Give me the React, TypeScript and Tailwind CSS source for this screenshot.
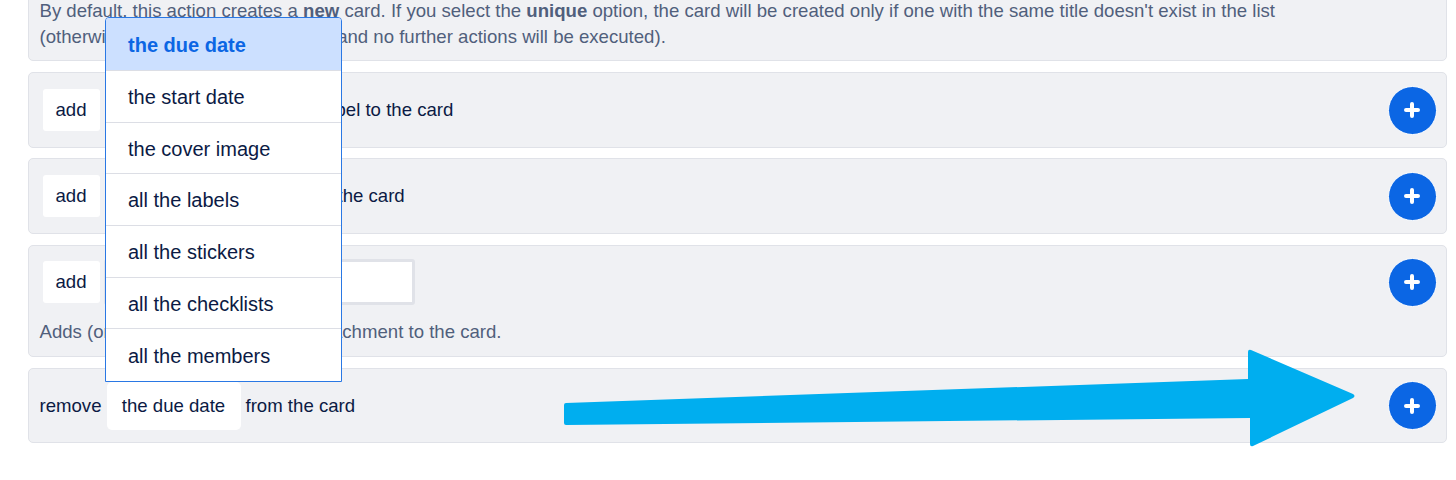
import React from 'react';

const options = ['the due date', 'the start date', 'the cover image', 'all the labels', 'all the stickers', 'all the checklists', 'all the members'];

const AddButton = () => (
  <button className="flex h-[49px] w-[49px] shrink-0 items-center justify-center rounded-full border border-white bg-[#0b66e4]">
    <svg width="18" height="18" viewBox="0 0 18 18" className="ml-[-1px]">
      <path d="M9 3v12M3 9h12" stroke="#fff" strokeWidth="4" strokeLinecap="round" />
    </svg>
  </button>
);

const Pill = ({ children }: { children: React.ReactNode }) => (
  <span className="flex h-[42px] w-[57px] items-center justify-center rounded-[3px] bg-white">{children}</span>
);

const App: React.FC = () => {
  return (
    <div className="relative h-[480px] w-[1456px] overflow-hidden bg-white font-['Liberation_Sans',Arial,sans-serif] text-[18.6px] text-[#0b1a44]">
      <div className="ml-[28px] mt-[-20px] flex w-[1419px] flex-col">
        {/* Description card */}
        <div className="h-[81px] rounded-[5px] border-[1.5px] border-[#e0e2e8] bg-[#f0f1f4] px-[10.5px] pt-[16.5px] leading-[26px] text-[#505f7c]">
          <p>
            By default, this action creates a <strong>new</strong> card. If you select the <strong>unique</strong> option, the card will be created only if one with the same title doesn't exist in the list
          </p>
          <p>(otherwise an error will be reported, and no further actions will be executed).</p>
        </div>

        {/* Label */}
        <div className="mt-[11px] flex h-[76px] items-center justify-between rounded-[5px] border-[1.5px] border-[#e0e2e8] bg-[#f0f1f4] pl-[13.5px] pr-[9px]">
          <div className="flex items-center gap-[4px]">
            <Pill>add</Pill>
            <span className="w-[198px] shrink-0" />
            <span>a label to the card</span>
          </div>
          <AddButton />
        </div>

        {/* Member */}
        <div className="mt-[10px] flex h-[76px] items-center justify-between rounded-[5px] border-[1.5px] border-[#e0e2e8] bg-[#f0f1f4] pl-[13.5px] pr-[9px]">
          <div className="flex items-center gap-[4px]">
            <Pill>add</Pill>
            <span className="w-[230px] shrink-0" />
            <span>the card</span>
          </div>
          <AddButton />
        </div>

        {/* Attachment */}
        <div className="mt-[11px] flex h-[112px] justify-between rounded-[5px] border-[1.5px] border-[#e0e2e8] bg-[#f0f1f4] pl-[13.5px] pr-[9px] pt-[13px]">
          <div className="flex flex-col">
            <div className="flex items-center gap-[4px]">
              <Pill>add</Pill>
              <span className="h-[46px] w-[311px] rounded-[3px] border-[3px] border-[#e0e2e8] bg-white" />
            </div>
            <p className="ml-[-3px] mt-[14px] leading-[26px] text-[#505f7c]">Adds (or replaces) the link as an attachment to the card.</p>
          </div>
          <div className="mt-[-1.5px]">
            <AddButton />
          </div>
        </div>

        {/* Remove */}
        <div className="mt-[11px] flex h-[75px] items-center justify-between rounded-[5px] border-[1.5px] border-[#e0e2e8] bg-[#f0f1f4] pl-[10.5px] pr-[9px]">
          <div className="flex items-center gap-[5px]">
            <span>remove</span>
            <span className="flex h-[48px] w-[134px] items-center justify-center rounded-[5px] bg-white">the due date</span>
            <span>from the card</span>
          </div>
          <AddButton />
        </div>
      </div>

      {/* Open dropdown */}
      <ul className="absolute left-[105px] top-[17px] w-[237px] overflow-hidden rounded-t-[4px] border border-[#2a78e4] bg-white text-[20px]">
        {options.map((option, i) => (
          <li
            key={option}
            className={
              i === 0
                ? 'flex h-[53px] items-center border-b border-[#dcdee5] bg-[#cce0ff] pl-[22px] pt-[2px] font-bold text-[#0b66e4]'
                : i === options.length - 1
                  ? 'flex h-[51.5px] items-center pl-[22px] pt-[1px]'
                  : 'flex h-[51.7px] items-center border-b border-[#dcdee5] pl-[22px] pt-[1.5px]'
            }
          >
            {option}
          </li>
        ))}
      </ul>

      {/* Annotation arrow */}
      <svg className="absolute left-0 top-0" width="1456" height="480" viewBox="0 0 1456 480">
        <path
          d="M566 403 L1248 379 L1248 352 Q1248 349 1251 350 L1353 394 Q1356 396 1353 398 L1253 446 Q1250 447 1250 444 L1250 418 L566 425 Q564 425 564 423 L564 405 Q564 403 566 403 Z"
          fill="#00aeef"
        />
      </svg>
    </div>
  );
};

export default App;
